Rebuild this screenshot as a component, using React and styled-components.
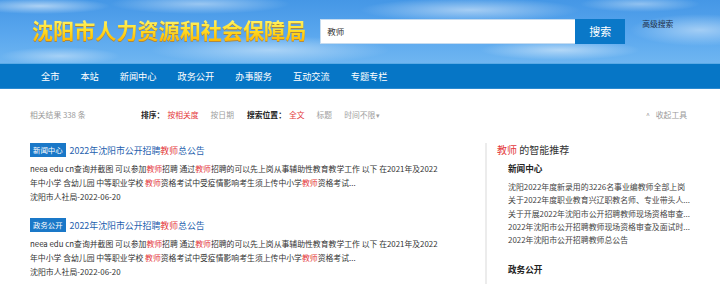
import React from 'react';
import styled, { createGlobalStyle } from 'styled-components';

const GlobalStyle = createGlobalStyle`
  * { box-sizing: border-box; }
  body {
    margin: 0;
    background: #ffffff;
    font-family: "Noto Sans CJK SC", "Noto Sans", sans-serif;
    color: #333;
  }
`;

const navItems = ['全市', '本站', '新闻中心', '政务公开', '办事服务', '互动交流', '专题专栏'];

const results = [
  { tag: '新闻中心', date: '沈阳市人社局-2022-06-20' },
  { tag: '政务公开', date: '沈阳市人社局-2022-06-20' },
];

const recommends = [
  '沈阳2022年度新录用的3226名事业编教师全部上岗',
  '关于2022年度职业教育兴辽职教名师、专业带头人...',
  '关于开展2022年沈阳市公开招聘教师现场资格审查...',
  '2022年沈阳市公开招聘教师现场资格审查及面试时...',
  '2022年沈阳市公开招聘教师总公告',
];

const Hl = ({ children }) => <Red>{children}</Red>;

const App = () => {
  return (
    <Page>
      <GlobalStyle />
      <Header>
        <Logo>沈阳市人力资源和社会保障局</Logo>
        <SearchForm>
          <SearchInput>教师</SearchInput>
          <SearchButton>搜索</SearchButton>
        </SearchForm>
        <Advanced>高级搜索</Advanced>
      </Header>

      <Nav>
        {navItems.map((n) => (
          <NavItem key={n}>{n}</NavItem>
        ))}
      </Nav>

      <Toolbar>
        <Count>相关结果 338 条</Count>
        <Group>
          <Label>排序：</Label>
          <Option $active>按相关度</Option>
          <Option>按日期</Option>
        </Group>
        <Group>
          <Label>搜索位置：</Label>
          <Option $active>全文</Option>
          <Option>标题</Option>
          <Option>时间不限<Caret>▾</Caret></Option>
        </Group>
        <Collapse>
          <Chevron>^</Chevron>收起工具
        </Collapse>
      </Toolbar>

      <Main>
        <ResultList>
          {results.map((r) => (
            <Result key={r.tag}>
              <TitleRow>
                <Tag>{r.tag}</Tag>
                <Title>
                  2022年沈阳市公开招聘<Hl>教师</Hl>总公告
                </Title>
              </TitleRow>
              <Summary>
                neea edu cn查询并截图 可以参加<Hl>教师</Hl>招聘 通过<Hl>教师</Hl>招聘的可以先上岗从事辅助性教育教学工作 以下 在2021年及2022<wbr />年中小学 含幼儿园 中等职业学校 <Hl>教师</Hl>资格考试中受疫情影响考生须上传中小学<Hl>教师</Hl>资格考试...
              </Summary>
              <Source>{r.date}</Source>
            </Result>
          ))}
        </ResultList>

        <Side>
          <SideHeading>
            <Hl>教师</Hl> 的智能推荐
          </SideHeading>
          <SideSection>
            <SectionTitle>新闻中心</SectionTitle>
            {recommends.map((t) => (
              <SideLink key={t}>{t}</SideLink>
            ))}
          </SideSection>
          <SideSection $spaced>
            <SectionTitle>政务公开</SectionTitle>
          </SideSection>
        </Side>
      </Main>
    </Page>
  );
};

export default App;

const Page = styled.div`
  width: 720px;
  height: 284px;
  overflow: hidden;
`;

const Header = styled.div`
  height: 63px;
  display: flex;
  align-items: center;
  padding-left: 32px;
  background:
    radial-gradient(ellipse 70px 8px at 40px 6px, rgba(255,255,255,0.55), transparent),
    radial-gradient(ellipse 90px 10px at 200px 4px, rgba(255,255,255,0.45), transparent),
    radial-gradient(ellipse 120px 14px at 270px 50px, rgba(255,255,255,0.45), transparent),
    radial-gradient(ellipse 60px 9px at 60px 56px, rgba(255,255,255,0.4), transparent),
    radial-gradient(ellipse 110px 12px at 470px 10px, rgba(255,255,255,0.5), transparent),
    radial-gradient(ellipse 80px 10px at 560px 50px, rgba(255,255,255,0.5), transparent),
    radial-gradient(ellipse 70px 16px at 700px 30px, rgba(255,255,255,0.45), transparent),
    radial-gradient(ellipse 60px 8px at 640px 4px, rgba(255,255,255,0.4), transparent),
    linear-gradient(180deg, #4597e6 0%, #5aa7ee 55%, #6fb6f1 100%);
`;

const Logo = styled.div`
  font-size: 21.1px;
  line-height: 1;
  font-weight: 700;
  background: linear-gradient(180deg, #fff36a 0%, #ffe02a 45%, #ffb800 100%);
  -webkit-background-clip: text;
  background-clip: text;
  color: transparent;
  filter: drop-shadow(0 1px 0 rgba(200, 120, 0, 0.7));
  margin-top: -2px;
`;

const SearchForm = styled.div`
  display: flex;
  margin-left: 14px;
`;

const SearchInput = styled.div`
  width: 255px;
  height: 25px;
  background: #fff;
  border: 1px solid #c6dcf0;
  border-right: none;
  font-size: 8.5px;
  line-height: 23px;
  padding-left: 6px;
  color: #333;
`;

const SearchButton = styled.div`
  width: 50px;
  height: 25px;
  background: #0a78c8;
  color: #fff;
  font-family: "Noto Sans CJK SC", serif;
  font-size: 11px;
  line-height: 25px;
  text-align: center;
`;

const Advanced = styled.div`
  align-self: flex-start;
  margin-top: 18px;
  margin-left: 17px;
  font-size: 7.8px;
  color: #1d2f48;
`;

const Nav = styled.div`
  height: 26px;
  display: flex;
  align-items: center;
  gap: 21px;
  padding-left: 41px;
  background: #0676c6;
  border-top: 1px solid #5aaae6;
  border-bottom: 1px solid #2c8ad0;
`;

const NavItem = styled.div`
  color: #fff;
  font-size: 9.2px;
`;

const Toolbar = styled.div`
  display: flex;
  align-items: center;
  margin-top: 21px;
  padding: 0 33px 0 30px;
  font-size: 7.8px;
  line-height: 10px;
`;

const Count = styled.div`
  color: #9a9a9a;
  width: 111px;
`;

const Group = styled.div`
  display: flex;
  align-items: center;
  gap: 12px;
  margin-right: 13px;
`;

const Label = styled.span`
  font-weight: 700;
  color: #222;
  margin-right: -9px;
`;

const Option = styled.span`
  color: ${(p) => (p.$active ? '#e4393c' : '#a0a0a0')};
`;

const Caret = styled.span`
  font-size: 7px;
  margin-left: 1px;
`;

const Collapse = styled.div`
  margin-left: auto;
  color: #9a9a9a;
  display: flex;
  align-items: center;
`;

const Chevron = styled.span`
  margin-right: 6px;
  font-size: 7px;
`;

const Main = styled.div`
  display: flex;
  margin-top: 23px;
  padding-left: 30px;
`;

const ResultList = styled.div`
  flex: 0 0 455px;
  padding-right: 42px;
`;

const Result = styled.div`
  margin-bottom: 15px;
`;

const TitleRow = styled.div`
  display: flex;
  align-items: center;
  gap: 4px;
  height: 14px;
`;

const Tag = styled.span`
  background: #1a78c8;
  color: #fff;
  font-size: 7.4px;
  height: 14px;
  line-height: 14px;
  padding: 0 3px;
`;

const Title = styled.span`
  color: #1f5fae;
  font-size: 8.9px;
`;

const Red = styled.span`
  color: #e4393c;
`;

const Summary = styled.div`
  margin-top: 5px;
  font-size: 7.85px;
  line-height: 14px;
  color: #333;
`;

const Source = styled.div`
  font-size: 7.9px;
  line-height: 13px;
  color: #333;
`;

const Side = styled.div`
  flex: 1;
  min-width: 0;
  overflow: hidden;
  border-left: 2px solid #ececec;
  padding-left: 10px;
  min-height: 160px;
`;

const SideHeading = styled.div`
  font-size: 10px;
  line-height: 14px;
  color: #333;
`;

const SideSection = styled.div`
  padding-left: 11px;
  margin-top: ${(p) => (p.$spaced ? '17px' : '5px')};
`;

const SectionTitle = styled.div`
  font-weight: 700;
  font-size: 8.6px;
  line-height: 13px;
  color: #222;
  margin-bottom: 5px;
`;

const SideLink = styled.div`
  font-size: 7.9px;
  line-height: 13.3px;
  color: #444;
  white-space: nowrap;
`;
